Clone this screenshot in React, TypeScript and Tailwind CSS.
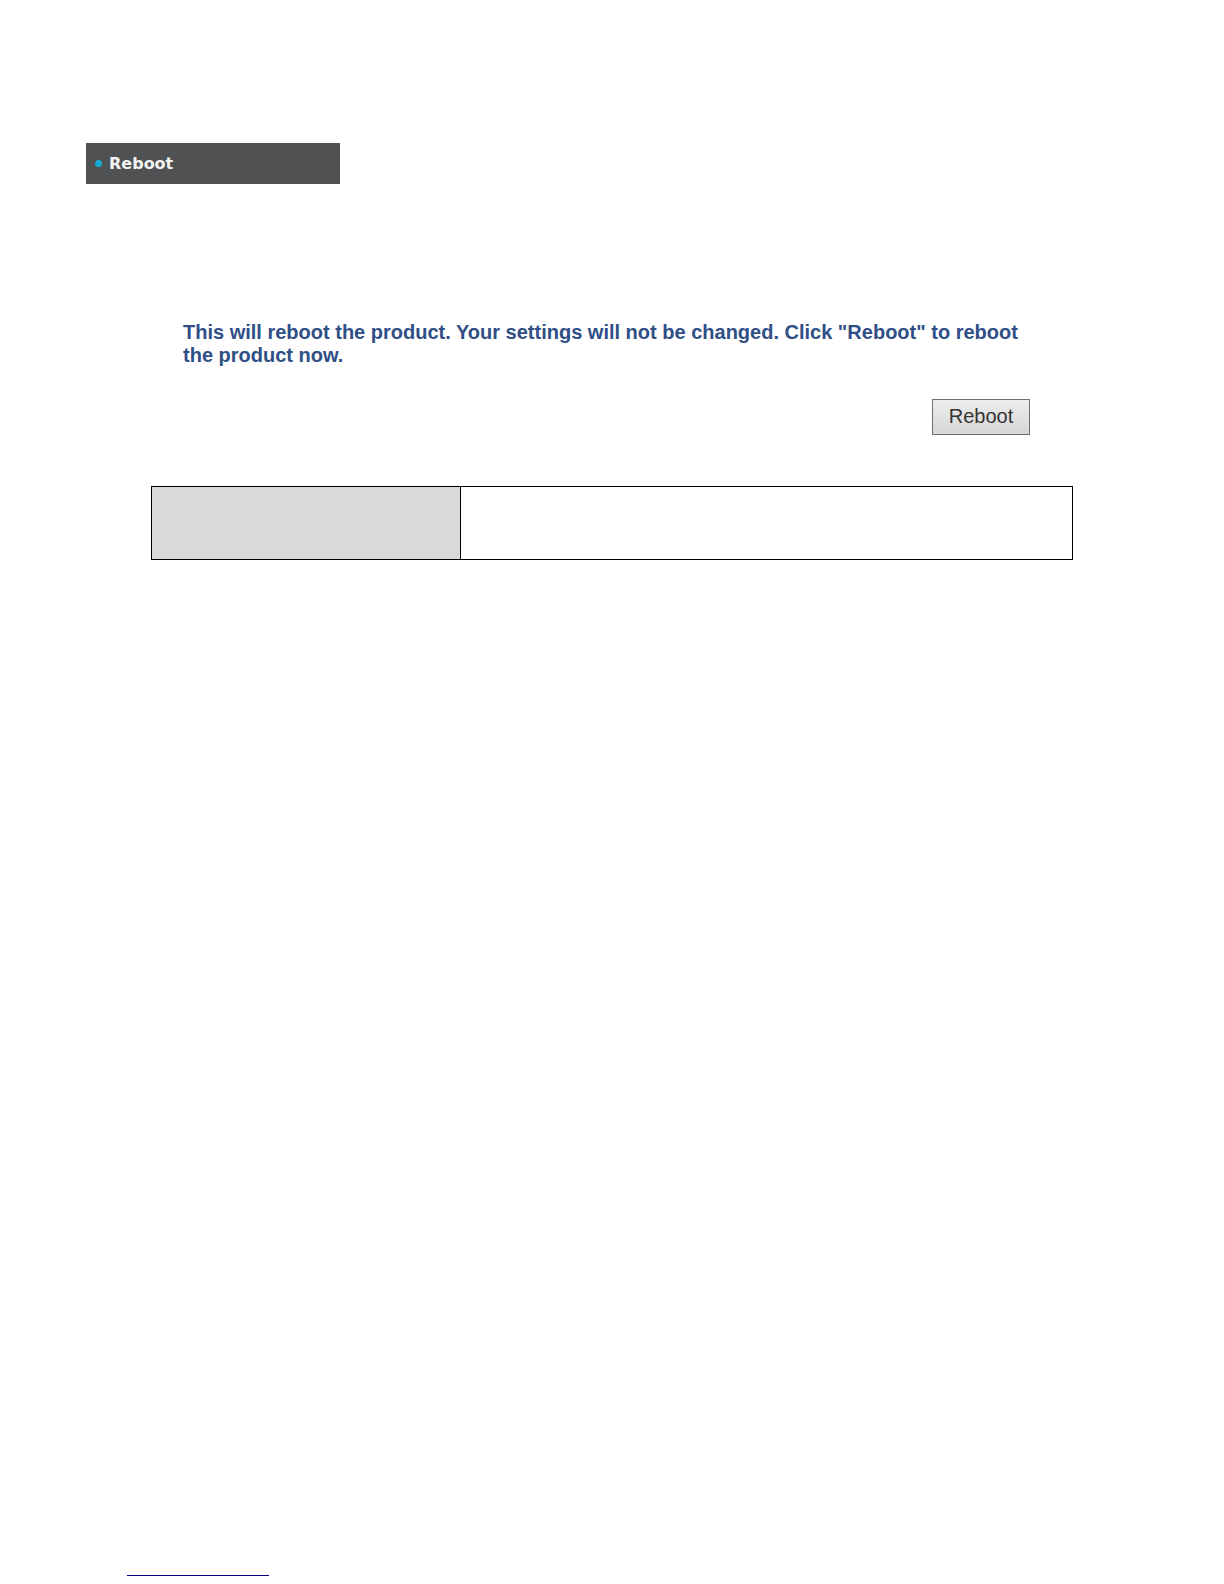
export default function App() {
  return (
    <div className="flex min-h-screen flex-col bg-white pt-[143px] pb-2 font-['Liberation_Sans',Arial,sans-serif]">
      <header className="pl-[86px]">
        <h1 className="flex h-[41px] w-[254px] items-center gap-[7px] bg-[#4f5152] pl-[9px] font-['DejaVu_Sans',Verdana,sans-serif] text-[16px] font-bold text-[#f4f4f4]">
          <span className="size-[7px] rounded-full bg-[#13acd6]" />
          Reboot
        </h1>
      </header>

      <main className="px-[151px] pt-[137px]">
        <section className="flex flex-col gap-8 pr-[43px] pl-8">
          <p className="pr-2 text-[20px] leading-[23px] font-bold text-[#2f4f86]">
            This will reboot the product. Your settings will not be changed. Click "Reboot" to reboot the product now.
          </p>
          <button
            type="button"
            className="h-9 w-[98px] self-end border border-[#6f6f6f] bg-linear-to-b from-[#ededed] to-[#d6d6d6] pb-0.5 text-[20px] leading-[23px] text-[#333333]"
          >
            Reboot
          </button>
        </section>

        <table className="mt-[51px] w-full table-fixed border-collapse">
          <tbody>
            <tr className="h-[73px]">
              <th scope="row" className="w-[309px] border border-black bg-[#d9d9d9]" />
              <td className="border border-black" />
            </tr>
          </tbody>
        </table>
      </main>

      <footer className="mt-auto pl-[127px]">
        <a href="#" aria-label="Website" className="block w-[142px] border-b border-[#000080]" />
      </footer>
    </div>
  );
}
